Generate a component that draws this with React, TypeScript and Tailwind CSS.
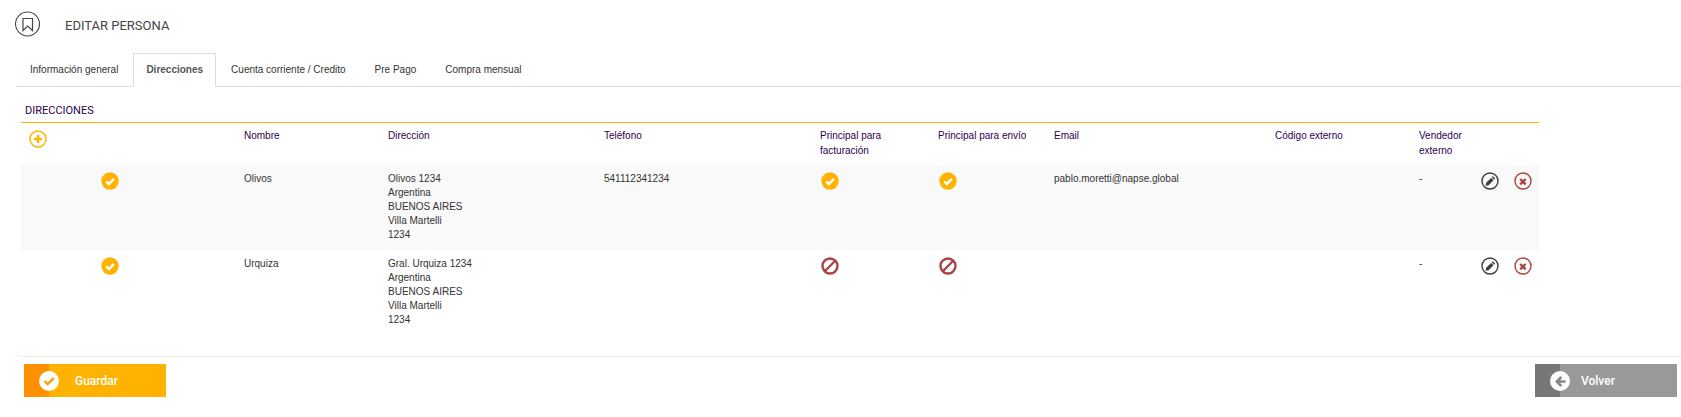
import type { ReactNode } from "react";

type Address = {
  name: string;
  lines: string[];
  phone: string;
  billing: boolean;
  shipping: boolean;
  email: string;
  code: string;
  seller: string;
};

const tabs = [
  "Información general",
  "Direcciones",
  "Cuenta corriente / Credito",
  "Pre Pago",
  "Compra mensual",
];

const addresses: Address[] = [
  {
    name: "Olivos",
    lines: ["Olivos 1234", "Argentina", "BUENOS AIRES", "Villa Martelli", "1234"],
    phone: "541112341234",
    billing: true,
    shipping: true,
    email: "pablo.moretti@napse.global",
    code: "",
    seller: "-",
  },
  {
    name: "Urquiza",
    lines: ["Gral. Urquiza 1234", "Argentina", "BUENOS AIRES", "Villa Martelli", "1234"],
    phone: "",
    billing: false,
    shipping: false,
    email: "",
    code: "",
    seller: "-",
  },
];

const Icon = ({ children }: { children: ReactNode }) => (
  <svg className="block size-[18px]" viewBox="0 0 18 18" fill="none" aria-hidden="true">
    {children}
  </svg>
);

const CheckIcon = () => (
  <Icon>
    <circle cx="9" cy="9" r="8.7" fill="#ffb300" />
    <path d="M5.2 9.3l2.7 2.6 5-5" stroke="#fff" strokeWidth="2.5" />
  </Icon>
);

const BanIcon = () => (
  <Icon>
    <circle cx="9" cy="9" r="7.5" stroke="#a94442" strokeWidth="2.4" />
    <path d="M3.8 14.2L14.2 3.8" stroke="#a94442" strokeWidth="2.3" />
  </Icon>
);

const PlusIcon = () => (
  <Icon>
    <circle cx="9" cy="9" r="8" stroke="#ffb300" strokeWidth="1.5" />
    <path d="M9 5v8M5 9h8" stroke="#ffb300" strokeWidth="2.4" />
  </Icon>
);

const EditIcon = () => (
  <Icon>
    <circle cx="9" cy="9" r="8" stroke="#3c3c3c" strokeWidth="1.4" />
    <path d="M4.6 13.8l.6-3 4.9-4.9 2.4 2.4-4.9 4.9z" fill="#3c3c3c" />
    <path d="M10.7 5.3l.7-.7q.4-.3.8 0l1.6 1.6q.3.4 0 .8l-.7.7z" fill="#3c3c3c" />
  </Icon>
);

const DeleteIcon = () => (
  <Icon>
    <circle cx="9" cy="9" r="8" stroke="#a94442" strokeWidth="1.4" />
    <path d="M6.2 7l5.4 5.4M11.6 7l-5.4 5.4" stroke="#a94442" strokeWidth="2.4" />
  </Icon>
);

const StatusIcon = ({ active }: { active: boolean }) => (
  <div className="pl-px">{active ? <CheckIcon /> : <BanIcon />}</div>
);

const Header = () => (
  <header className="flex items-center gap-6 pt-[11px] pl-[15px]">
    <svg className="size-[26px]" viewBox="0 0 26 26" fill="none" stroke="#444" aria-hidden="true">
      <circle cx="12.5" cy="13" r="12" strokeWidth="1.1" />
      <path d="M8 7.5h9.5v12l-4.75-4.5L8 19.5z" strokeWidth="1.2" />
    </svg>
    <h1 className="pt-1 font-[Roboto,sans-serif] text-[13px] leading-5 text-[#444]">EDITAR PERSONA</h1>
  </header>
);

const Tabs = () => (
  <nav className="mt-4 ml-4 border-b border-[#ddd]" aria-label="Secciones">
    <ul className="-mb-px flex gap-px">
      {tabs.map((tab) => (
        <li key={tab}>
          <a
            href="#"
            className={
              tab === "Direcciones"
                ? "block border border-b-white border-[#ddd] px-3 py-2 leading-4 font-bold text-[#555]"
                : "block border border-transparent px-[13px] py-2 leading-4 text-[#333]"
            }
          >
            {tab}
          </a>
        </li>
      ))}
    </ul>
  </nav>
);

const AddressTable = () => (
  <table className="w-full table-fixed border-collapse text-left">
    <colgroup>
      <col className="w-[215px]" />
      <col className="w-[144px]" />
      <col className="w-[216px]" />
      <col className="w-[216px]" />
      <col className="w-[118px]" />
      <col className="w-[116px]" />
      <col className="w-[221px]" />
      <col className="w-[144px]" />
      <col className="w-[62px]" />
      <col className="w-[33px]" />
      <col className="w-[33px]" />
    </colgroup>
    <thead className="align-top leading-[15px] text-[#2b0050]">
      <tr className="h-[42px] *:px-2 *:pt-[5px] *:font-normal">
        <th>
          <button type="button" className="block pt-0.5" aria-label="Agregar dirección">
            <PlusIcon />
          </button>
        </th>
        <th>Nombre</th>
        <th>Dirección</th>
        <th>Teléfono</th>
        <th>Principal para facturación</th>
        <th>Principal para envío</th>
        <th>Email</th>
        <th>Código externo</th>
        <th>Vendedor externo</th>
        <td colSpan={2}></td>
      </tr>
    </thead>
    <tbody className="align-top leading-[14px] text-[#333]">
      {addresses.map((address) => (
        <tr key={address.name} className="h-[85px] odd:bg-[#f9f9f9] *:px-2 *:pt-[7px]">
          <td>
            <div className="pl-[72px]">
              <CheckIcon />
            </div>
          </td>
          <td>{address.name}</td>
          <td>
            {address.lines.map((line) => (
              <div key={line}>{line}</div>
            ))}
          </td>
          <td>{address.phone}</td>
          <td>
            <StatusIcon active={address.billing} />
          </td>
          <td>
            <StatusIcon active={address.shipping} />
          </td>
          <td>{address.email}</td>
          <td>{address.code}</td>
          <td>{address.seller}</td>
          <td>
            <button type="button" className="block" aria-label={`Editar ${address.name}`}>
              <EditIcon />
            </button>
          </td>
          <td>
            <button type="button" className="block" aria-label={`Eliminar ${address.name}`}>
              <DeleteIcon />
            </button>
          </td>
        </tr>
      ))}
    </tbody>
  </table>
);

const Footer = () => (
  <footer className="flex justify-between pt-[7px] pr-1 pl-6 font-[Roboto,sans-serif] text-xs font-medium text-white">
    <button
      type="submit"
      className="flex h-[33px] w-[142px] items-center gap-4 bg-linear-to-r from-[#ff9100] from-[25px] to-[#ffb300] to-[25px] pl-[15px]"
    >
      <svg className="size-5" viewBox="0 0 20 20" fill="none" aria-hidden="true">
        <circle cx="10" cy="10" r="10" fill="#fff" />
        <path d="M5.5 10l3.2 3.1 6-6" stroke="#ffa000" strokeWidth="2.4" />
      </svg>
      Guardar
    </button>
    <button
      type="button"
      className="flex h-[33px] w-[142px] items-center gap-[11px] bg-linear-to-r from-[#777] from-[25px] to-[#999] to-[25px] pl-[15px]"
    >
      <svg className="size-5" viewBox="0 0 20 20" fill="none" aria-hidden="true">
        <circle cx="10" cy="10" r="10" fill="#fff" />
        <path d="M15.5 10.5H7.5M11.3 6l-4.5 4.5 4.5 4.5" stroke="#888" strokeWidth="2.6" />
      </svg>
      Volver
    </button>
  </footer>
);

const App = () => {
  return (
    <main className="min-h-screen bg-white font-['Liberation_Sans',Arial,sans-serif] text-[10px]">
      <Header />
      <Tabs />
      <section className="ml-4 rounded-bl border-b border-[#eee] pt-4 pr-[142px] pb-[21px] pl-[5px]">
        <h2 className="border-b border-[#ffb300] px-1 pb-[3px] font-[Roboto,sans-serif] text-[11px] leading-4 text-[#2b0050]">
          DIRECCIONES
        </h2>
        <AddressTable />
      </section>
      <Footer />
    </main>
  );
};

export default App;
